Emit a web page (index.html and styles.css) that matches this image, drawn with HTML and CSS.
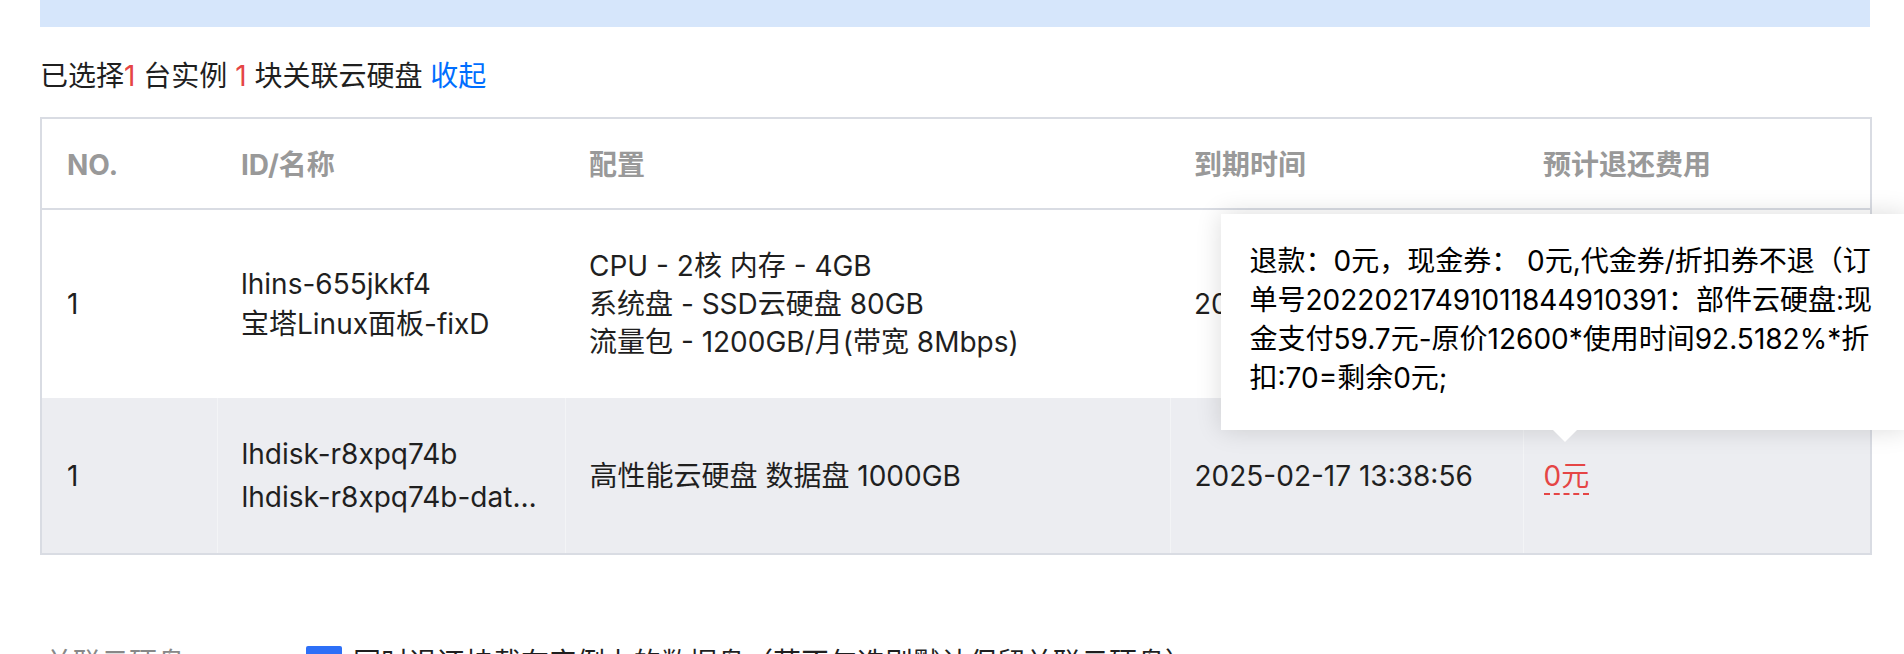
FILE: index.html
```html
<!DOCTYPE html>
<html>
  <head>
    <meta charset="utf-8">
    <link rel="stylesheet" href="styles.css">
  </head>
  <body>
    <div class="page">
      <div class="alert-bar"></div>

      <p class="summary">已选择<span class="num">1</span> 台实例 <span class="num">1</span> 块关联云硬盘 <a class="link">收起</a></p>

      <table class="res-table">
        <thead>
          <tr>
            <th class="col-no">NO.</th>
            <th class="col-id">ID/名称</th>
            <th class="col-conf">配置</th>
            <th class="col-time">到期时间</th>
            <th class="col-fee">预计退还费用</th>
          </tr>
        </thead>
        <tbody>
          <tr class="row-ins">
            <td>1</td>
            <td>
              <div class="id-line">lhins-655jkkf4</div>
              <div class="id-line">宝塔Linux面板-fixD</div>
            </td>
            <td>
              <div>CPU - 2核 内存 - 4GB</div>
              <div>系统盘 - SSD云硬盘 80GB</div>
              <div>流量包 - 1200GB/月(带宽 8Mbps)</div>
            </td>
            <td>2025-02-17 13:38:56</td>
            <td><span class="fee">0元</span></td>
          </tr>
          <tr class="row-disk">
            <td>1</td>
            <td>
              <div class="id-line">lhdisk-r8xpq74b</div>
              <div class="id-line ellipsis">lhdisk-r8xpq74b-data-disk</div>
            </td>
            <td>高性能云硬盘 数据盘 1000GB</td>
            <td>2025-02-17 13:38:56</td>
            <td>
              <span class="fee tip-anchor">0元
                <span class="tooltip">退款：0元，现金券： 0元,代金券/折扣券不退（订<br>单号20220217491011844910391：部件云硬盘:现<br>金支付59.7元-原价12600*使用时间92.5182%*折<br>扣:70=剩余0元;</span>
              </span>
            </td>
          </tr>
        </tbody>
      </table>

      <div class="form-row">
        <span class="form-label">关联云硬盘</span>
        <span class="checkbox"></span>
        <span class="check-text">同时退还挂载在实例上的数据盘（若不勾选则默认保留关联云硬盘）</span>
      </div>
    </div>
  </body>
</html>
```

FILE: styles.css
```css
body {
  margin: 0;
  background: #fff;
  font-family: Inter, "Noto Sans CJK SC", sans-serif;
  font-size: 28px;
  color: #1f1f1f;
  overflow: hidden;
}
.page {
  padding: 0 34px 0 40px;
}
.alert-bar {
  height: 27px;
  background: #d6e6fb;
}
.summary {
  margin: 29px 0 21px;
  line-height: 40px;
}
.num {
  color: #e54545;
}
.link {
  color: #006eff;
  cursor: pointer;
}
.res-table {
  width: 1830px;
  border-collapse: collapse;
  table-layout: fixed;
  border: 2px solid #d9dce3;
}
.res-table th {
  box-sizing: border-box;
  text-align: left;
  color: #999;
  font-weight: bold;
  line-height: 38px;
  padding: 27px 24px 24px;
  border-bottom: 2px solid #d9dce3;
}
.col-no { width: 176px; }
.col-id { width: 348px; }
.col-conf { width: 605px; }
.col-time { width: 353px; }
.col-fee { width: 348px; }
.res-table td {
  line-height: 38px;
  padding: 0 24px;
  vertical-align: middle;
}
.res-table td:first-child,
.res-table th:first-child {
  padding-left: 25px;
}
.res-table td:last-child,
.res-table th:last-child {
  padding-left: 20px;
}
.row-ins td {
  padding-top: 37px;
  padding-bottom: 37px;
}
.row-disk td {
  background: #ecedf1;
  border-left: 1px solid #f3f4f6;
  padding-top: 37px;
  padding-bottom: 37px;
}
.row-disk td:first-child {
  border-left: none;
}
.row-ins .id-line + .id-line {
  margin-top: 2px;
}
.row-disk .id-line + .id-line {
  margin-top: 5px;
}
.ellipsis {
  white-space: nowrap;
  overflow: hidden;
  text-overflow: ellipsis;
}
.fee {
  color: #e54545;
}
.tip-anchor {
  position: relative;
  display: inline-block;
  border-bottom: 2px dashed #e54545;
  line-height: 34px;
}
.tooltip {
  position: absolute;
  left: -323px;
  bottom: calc(100% + 29px);
  width: 630px;
  padding: 28px 28px 32px 29px;
  background: #fff;
  color: #000;
  line-height: 39px;
  white-space: nowrap;
  box-shadow: 0 0 24px rgba(0, 0, 0, 0.14);
  z-index: 2;
}
.tooltip::after {
  content: "";
  position: absolute;
  left: 332px;
  top: 100%;
  border-left: 12px solid transparent;
  border-right: 12px solid transparent;
  border-top: 12px solid #fff;
}
.form-row {
  display: flex;
  align-items: flex-start;
  margin-top: 89px;
  line-height: 38px;
}
.form-label {
  width: 261px;
  color: #888;
  padding-left: 5px;
}
.checkbox {
  width: 36px;
  height: 36px;
  margin-top: 2px;
  background: #2d6ff7;
  border-radius: 2px;
  flex-shrink: 0;
}
.check-text {
  margin-left: 11px;
}
```
